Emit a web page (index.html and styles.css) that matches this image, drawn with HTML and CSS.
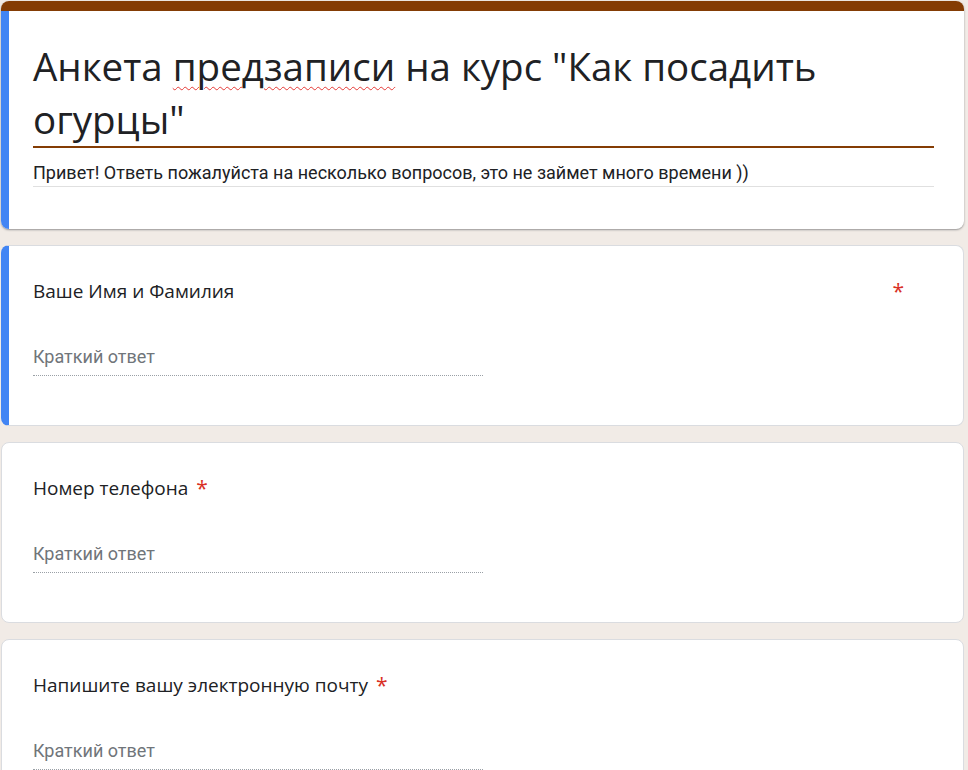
FILE: index.html
```html
<!DOCTYPE html>
<html lang="ru">
<head>
<meta charset="utf-8">
<title>Анкета предзаписи</title>
<link rel="stylesheet" href="styles.css">
</head>
<body>
<main class="form">
  <section class="card card--header">
    <div class="header-top"></div>
    <div class="header-body">
      <h1 class="form-title">Анкета <span class="spell">предзаписи</span> на курс "Как посадить огурцы"</h1>
      <p class="form-desc">Привет! Ответь пожалуйста на несколько вопросов, это не займет много времени ))</p>
    </div>
  </section>

  <section class="card card--active">
    <div class="q-head q-head--spread">
      <span class="q-title">Ваше Имя и Фамилия</span>
      <span class="req">*</span>
    </div>
    <div class="q-input">Краткий ответ</div>
  </section>

  <section class="card">
    <div class="q-head">
      <span class="q-title">Номер телефона</span>
      <span class="req">*</span>
    </div>
    <div class="q-input">Краткий ответ</div>
  </section>

  <section class="card">
    <div class="q-head">
      <span class="q-title">Напишите вашу электронную почту</span>
      <span class="req">*</span>
    </div>
    <div class="q-input">Краткий ответ</div>
  </section>
</main>
</body>
</html>
```

FILE: styles.css
```css
html, body {
  margin: 0;
  padding: 0;
  background: #f1ebe6;
  overflow: hidden;
}

body {
  height: 770px;
  font-family: Roboto, "Liberation Sans", sans-serif;
  color: #202124;
}

.form {
  display: flex;
  flex-direction: column;
  gap: 16px;
  width: 963px;
  padding: 1px 0 0 1px;
}

.card {
  background: #fff;
  border: 1px solid #dadce0;
  border-radius: 8px;
  padding: 33px 31px 49px 31px;
}

.card--active {
  border-left: 8px solid #4285f4;
  padding-left: 24px;
}

.card--header {
  border: none;
  padding: 0;
  overflow: hidden;
  box-shadow: 0 1px 2px rgba(60, 64, 67, 0.5);
}

.header-top {
  height: 10px;
  background: #843c04;
}

.header-body {
  border-left: 8px solid #4285f4;
  padding: 29px 30px 42px 24px;
}

.form-title {
  margin: 0;
  font-family: "Open Sans", sans-serif;
  font-weight: 400;
  font-size: 38.5px;
  line-height: 53px;
  color: #202124;
  border-bottom: 2px solid #843c04;
}

.spell {
  text-decoration: underline wavy #e53935;
  text-decoration-thickness: 1px;
  text-underline-offset: 5px;
}

.form-desc {
  margin: 0;
  padding: 15px 0 3px;
  font-size: 18px;
  line-height: 20px;
  border-bottom: 1px solid #e0e0e0;
}

.q-head {
  display: flex;
  align-items: flex-start;
  gap: 8px;
  font-family: "Open Sans", sans-serif;
  font-size: 19px;
  line-height: 24px;
  color: #202124;
}

.q-head--spread {
  justify-content: space-between;
  padding-right: 28px;
}

.req {
  color: #d93025;
  font-size: 21px;
  line-height: 24px;
}

.q-input {
  margin-top: 42px;
  width: 450px;
  font-size: 18px;
  line-height: 24px;
  color: #70757a;
  padding-bottom: 6px;
  border-bottom: 1px dotted #9aa0a6;
}
```
